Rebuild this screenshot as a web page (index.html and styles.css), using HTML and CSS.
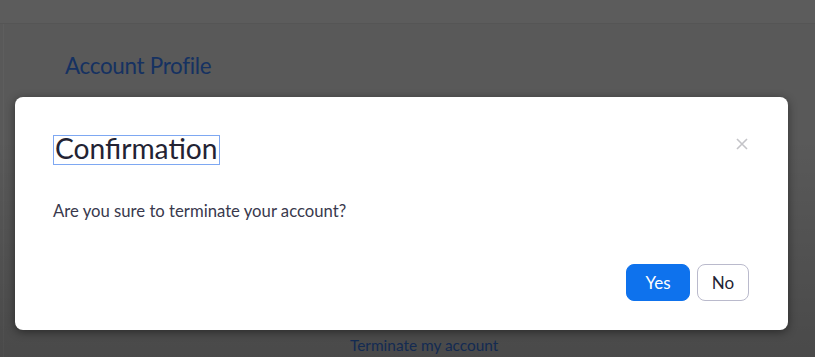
FILE: index.html
```html
<!DOCTYPE html>
<html>
<head>
<meta charset="utf-8">
<link rel="stylesheet" href="styles.css">
</head>
<body>
<div class="page">
  <div class="topbar"></div>
  <div class="content">
    <h2 class="page-title">Account Profile</h2>
    <div class="spacer"></div>
    <a class="terminate-link">Terminate my account</a>
  </div>
</div>
<div class="overlay">
  <div class="modal">
    <div class="modal-header">
      <h1 class="modal-title">Confirmation</h1>
      <span class="close" aria-label="Close">
        <svg width="12" height="12" viewBox="0 0 12 12"><path d="M1 1L11 11M11 1L1 11" stroke="#c4c4c8" stroke-width="1.6" fill="none"/></svg>
      </span>
    </div>
    <p class="modal-body">Are you sure to terminate your account?</p>
    <div class="modal-footer">
      <button class="btn btn-primary">Yes</button>
      <button class="btn btn-default">No</button>
    </div>
  </div>
</div>
</body>
</html>
```

FILE: styles.css
```css
* { box-sizing: border-box; }
html, body { margin: 0; padding: 0; }
body {
  font-family: Lato, "Open Sans", sans-serif;
  width: 815px;
  height: 357px;
  overflow: hidden;
  position: relative;
  background: #b2b2b2;
}
.page { height: 357px; display: flex; flex-direction: column; }
.topbar { height: 24px; background: #b8b8b8; border-bottom: 1px solid #aaaaaa; }
.content {
  flex: 1;
  margin-left: 3px;
  border-left: 1px solid #bcbcbc;
  padding-left: 61px;
  display: flex;
  flex-direction: column;
}
.page-title {
  margin: 28px 0 0 0;
  font-size: 22.4px;
  font-weight: 400;
  line-height: 28px;
  color: #2c63c2;
  letter-spacing: -0.3px;
}
.spacer { flex: 1; }
.terminate-link {
  margin-left: 285px;
  margin-bottom: 2px;
  font-size: 15.4px;
  line-height: 20px;
  color: #2f66c4;
}
.overlay {
  position: absolute;
  inset: 0;
  background: linear-gradient(to bottom, rgba(0,0,0,0.5) 0%, rgba(0,0,0,0.5) 40%, rgba(0,0,0,0.59) 100%);
  padding: 97px 27px 0 15px;
}
.modal {
  width: 773px;
  height: 233px;
  background: #fff;
  border-radius: 8px;
  box-shadow: 0 2px 10px rgba(0,0,0,0.45);
  padding: 38px 39px 29px 38px;
  display: flex;
  flex-direction: column;
}
.modal-header {
  display: flex;
  justify-content: space-between;
  align-items: flex-start;
}
.modal-title {
  margin: 0;
  font-size: 28.2px;
  font-weight: 400;
  line-height: 25px;
  color: #232333;
  padding: 0 1px 0 1px;
  border: 1px solid #7ea8f2;
  height: 30px;
}
.close { margin-top: 3px; margin-right: 1px; display: flex; }
.modal-body {
  margin: 36px 0 0 0;
  font-size: 16.7px;
  line-height: 20px;
  color: #39394d;
}
.modal-footer {
  margin-top: auto;
  display: flex;
  justify-content: flex-end;
  gap: 7px;
}
.btn {
  font-family: Lato, "Open Sans", sans-serif;
  font-size: 17px;
  height: 37px;
  border-radius: 8px;
  padding: 0;
  cursor: pointer;
}
.btn-primary {
  width: 64px;
  background: #0e72ed;
  color: #fff;
  border: 1px solid #0e72ed;
}
.btn-default {
  width: 52px;
  background: #fff;
  color: #232333;
  border: 1px solid #babacc;
}
```
